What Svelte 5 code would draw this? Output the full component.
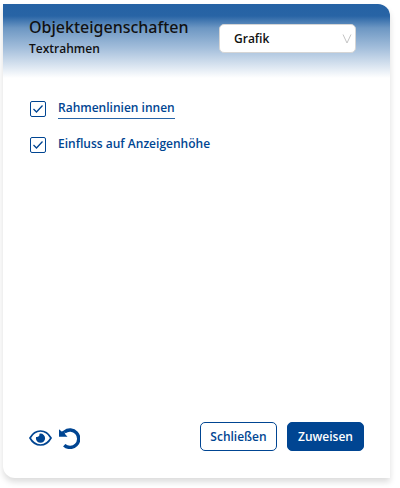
<script lang="ts">
  let category = $state('grafik');
  let options = $state([
    { id: 'innerBorders', label: 'Rahmenlinien innen', checked: true, active: true },
    { id: 'displayHeight', label: 'Einfluss auf Anzeigenhöhe', checked: true, active: false },
  ]);
</script>

<section class="panel">
  <header>
    <div class="titles">
      <h1>Objekteigenschaften</h1>
      <h2>Textrahmen</h2>
    </div>
    <div class="select">
      <select bind:value={category} aria-label="Kategorie">
        <option value="grafik">Grafik</option>
      </select>
      <svg viewBox="0 0 10 10" aria-hidden="true">
        <path d="M1 .5 5 9 9 .5" />
      </svg>
    </div>
  </header>

  <div class="options">
    {#each options as option (option.id)}
      <div class="option">
        <input type="checkbox" id={option.id} bind:checked={option.checked} />
        <label for={option.id} class:active={option.active}>{option.label}</label>
      </div>
    {/each}
  </div>

  <footer>
    <div class="tools">
      <button class="icon" type="button" aria-label="Vorschau">
        <svg width="23" height="16" viewBox="0 0 23 16">
          <path
            d="M1 8C3.500 3.500 7.200 1 11.500 1S19.500 3.500 22 8C19.500 12.500 15.800 15 11.500 15S3.500 12.500 1 8Z"
            fill="none"
            stroke="currentColor"
            stroke-width="1.700"
          />
          <path d="M11.500 3.600a4.600 4.600 0 1 1-4.600 4.600q0-.7.200-1.300a2.600 2.600 0 0 0 3.300-3.200q.5-.1 1.100-.1Z" fill="currentColor" />
        </svg>
      </button>
      <button class="icon" type="button" aria-label="Zurücksetzen">
        <svg width="21" height="21" viewBox="0 0 21 21">
          <path d="M5.500 4A8.700 8.700 0 1 1 5.200 17.200" fill="none" stroke="currentColor" stroke-width="3.400" />
          <path d="M0 1.200 2.600 3.600 5.500 2.500 6 6 8.500 8.800H0Z" fill="currentColor" />
        </svg>
      </button>
    </div>
    <div class="actions">
      <button class="btn" type="button">Schließen</button>
      <button class="btn primary" type="button">Zuweisen</button>
    </div>
  </footer>
</section>

<style>
  :global(body) {
    background: #fff;
  }

  .panel {
    --blue: #004592;
    display: flex;
    flex-direction: column;
    box-sizing: border-box;
    min-height: calc(100vh - 14px);
    margin: 4px 10px 10px 3px;
    border-radius: 0 12px 0 12px;
    background: #fff;
    box-shadow: 0 4px 6px rgba(0, 0, 0, 0.14);
    overflow: hidden;
    font-family: 'Open Sans', 'Noto Sans', sans-serif;
    font-size: 12px;
    font-weight: 600;
    line-height: 18px;
    color: #111;
  }

  header {
    display: flex;
    justify-content: space-between;
    align-items: flex-start;
    box-sizing: border-box;
    height: 76px;
    padding: 12px 34px 0 26px;
    background: linear-gradient(#2562a4 0, #2864a5 12px, #6d97c3 24px, #a3bedb 44px, #fff 74px);
  }

  h1,
  h2 {
    margin: 0;
  }

  h1 {
    font-family: 'Noto Sans', 'Open Sans', sans-serif;
    font-size: 16px;
    font-weight: 500;
    line-height: 22px;
  }

  h2 {
    margin-top: 2px;
    font-size: 12px;
    font-weight: 600;
    line-height: 18px;
  }

  .select {
    position: relative;
    margin-top: 8px;
  }

  select {
    appearance: none;
    display: block;
    box-sizing: border-box;
    width: 137px;
    height: 29px;
    padding: 0 24px 0 14px;
    border: 1px solid #d5d5d5;
    border-radius: 5px;
    background: #fff;
    font: inherit;
    color: inherit;
  }

  .select svg {
    position: absolute;
    top: 10px;
    right: 4px;
    width: 10px;
    height: 10px;
    fill: none;
    stroke: #c4c4c4;
    pointer-events: none;
  }

  .options {
    display: flex;
    flex-direction: column;
    gap: 14px;
    padding: 18px 27px;
  }

  .option {
    display: flex;
    align-items: center;
    gap: 12px;
    height: 22px;
    color: var(--blue);
  }

  .option label {
    padding-bottom: 1px;
    border-bottom: 1px solid transparent;
  }

  .option label.active {
    border-color: #2864a5;
  }

  input {
    appearance: none;
    box-sizing: border-box;
    width: 16px;
    height: 16px;
    margin: 0;
    border: 1px solid var(--blue);
    border-radius: 2px;
    background: #fff;
  }

  input:checked {
    background: url("data:image/svg+xml,%3Csvg xmlns='http://www.w3.org/2000/svg' viewBox='0 0 14 14'%3E%3Cpath d='M2.500 7 5.500 10 11.500 3.500' fill='none' stroke='%23004592' stroke-width='1.300'/%3E%3C/svg%3E") center / 14px no-repeat;
  }

  footer {
    display: flex;
    justify-content: space-between;
    align-items: center;
    margin-top: auto;
    padding: 0 26px 27px;
  }

  .tools,
  .actions {
    display: flex;
    align-items: center;
  }

  .tools {
    gap: 7px;
    padding-top: 3px;
  }

  .actions {
    gap: 10px;
  }

  .icon {
    display: flex;
    padding: 0;
    border: 0;
    background: none;
    color: var(--blue);
  }

  .btn {
    box-sizing: border-box;
    min-width: 77px;
    height: 29px;
    padding: 0 8px;
    border: 1px solid var(--blue);
    border-radius: 5px;
    background: #fff;
    font: inherit;
    color: var(--blue);
  }

  .primary {
    background: var(--blue);
    color: #fff;
  }
</style>
